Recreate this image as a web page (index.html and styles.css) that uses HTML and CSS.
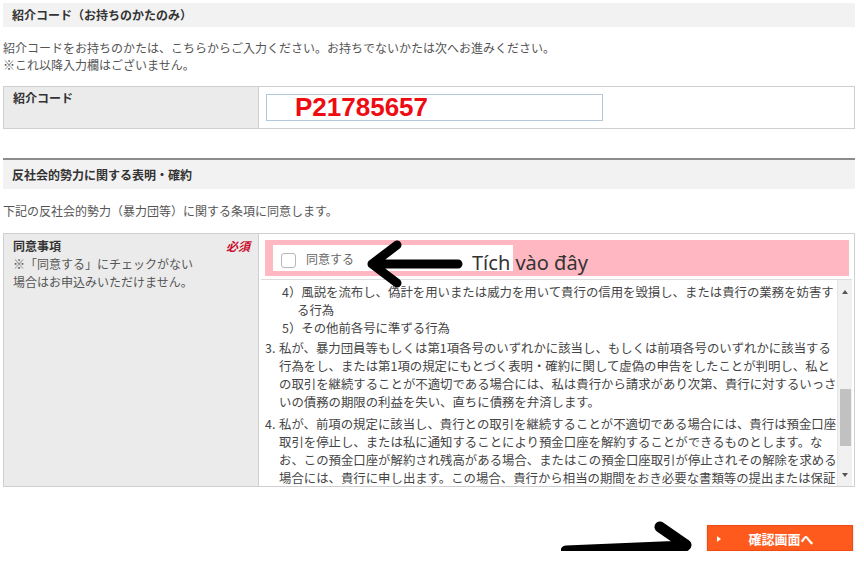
FILE: index.html
```html
<!DOCTYPE html>
<html lang="ja">
<head>
<meta charset="UTF-8">
<title>紹介コード・反社会的勢力に関する表明</title>
<link rel="stylesheet" href="styles.css">
</head>
<body>

<div class="page">

    <!-- 紹介コード -->
    <div class="sec-head first">紹介コード（お持ちのかたのみ）</div>
    <p class="lead">紹介コードをお持ちのかたは、こちらからご入力ください。お持ちでないかたは次へお進みください。<br>※これ以降入力欄はございません。</p>

    <div class="form-row row-code">
        <div class="label-cell">
            <span class="label">紹介コード</span>
        </div>
        <div class="value-cell">
            <input class="code-input" type="text" value="P21785657">
        </div>
    </div>

    <!-- 反社会的勢力 -->
    <div class="sec-head second">反社会的勢力に関する表明・確約</div>
    <p class="lead lead-2">下記の反社会的勢力（暴力団等）に関する条項に同意します。</p>

    <div class="form-row row-agree">
        <div class="label-cell">
            <div class="label-line">
                <span class="label">同意事項</span>
                <span class="required">必須</span>
            </div>
            <p class="note">※「同意する」にチェックがない<br>場合はお申込みいただけません。</p>
        </div>
        <div class="value-cell agree-cell">
            <div class="agree-box">
                <label class="agree-label">
                    <span class="checkbox"></span>
                    <span>同意する</span>
                </label>
            </div>
            <div class="terms">
                <div class="terms-text">
                    <ol class="sub-list">
                        <li>4）風説を流布し、偽計を用いまたは威力を用いて貴行の信用を毀損し、または貴行の業務を妨害す<br>る行為</li>
                        <li>5）その他前各号に準ずる行為</li>
                    </ol>
                    <ol class="main-list">
                        <li><span class="num">3.</span>私が、暴力団員等もしくは第1項各号のいずれかに該当し、もしくは前項各号のいずれかに該当する<br>行為をし、または第1項の規定にもとづく表明・確約に関して虚偽の申告をしたことが判明し、私と<br>の取引を継続することが不適切である場合には、私は貴行から請求があり次第、貴行に対するいっさ<br>いの債務の期限の利益を失い、直ちに債務を弁済します。</li>
                        <li><span class="num">4.</span>私が、前項の規定に該当し、貴行との取引を継続することが不適切である場合には、貴行は預金口座<br>取引を停止し、または私に通知することにより預金口座を解約することができるものとします。な<br>お、この預金口座が解約され残高がある場合、またはこの預金口座取引が停止されその解除を求める<br>場合には、貴行に申し出ます。この場合、貴行から相当の期間をおき必要な書類等の提出または保証</li>
                    </ol>
                </div>
                <div class="scrollbar">
                    <span class="arrow-up"></span>
                    <span class="thumb"></span>
                    <span class="arrow-down"></span>
                </div>
            </div>
        </div>
    </div>

    <div class="actions">
        <button class="btn-confirm" type="button"><span class="btn-mark"></span>確認画面へ</button>
    </div>

    <!-- annotations drawn over the form -->
    <svg class="note-arrow arrow-left" width="100" height="50" viewBox="0 0 100 50">
        <path d="M92 25 L6 25 M31 6 L6 25 L31 44" fill="none" stroke="#000" stroke-width="9" stroke-linecap="round" stroke-linejoin="round"/>
    </svg>
    <span class="hint">Tích vào đây</span>

    <svg class="note-arrow arrow-right" width="140" height="56" viewBox="0 0 140 56">
        <path d="M5 35 L124 30 M99 11 L125 29 L101 49" fill="none" stroke="#000" stroke-width="11" stroke-linecap="round" stroke-linejoin="round"/>
    </svg>
</div>

</body>
</html>
```

FILE: styles.css
```css
/* Reset */
* {
    box-sizing: border-box;
}

body {
    margin: 0;
    background-color: #fff;
    font-family: "Noto Sans CJK JP", "Noto Sans", sans-serif;
    font-size: 12px;
    color: #555;
}

.page {
    position: relative;
    width: 858px;
    padding: 3px 3px 0 3px;
}

/* Section headers */
.sec-head {
    background-color: #f2f2f2;
    color: #333;
    font-weight: bold;
    font-size: 12px;
    padding-left: 9px;
}

.sec-head.first {
    height: 24px;
    line-height: 24px;
}

.sec-head.second {
    margin-top: 29px;
    height: 31px;
    line-height: 29px;
    border-top: 2px solid #8c8c8c;
}

.lead {
    margin: 12px 0 0;
    line-height: 17px;
}

.lead-2 {
    margin-top: 13px;
}

/* Form rows */
.form-row {
    display: flex;
    margin-top: 13px;
    border: 1px solid #cfcfcf;
}

.row-agree {
    margin-top: 14px;
    height: 254px;
    overflow: hidden;
}

.label-cell {
    width: 255px;
    flex-shrink: 0;
    background-color: #ebebeb;
    border-right: 1px solid #cfcfcf;
    padding: 2px 8px 0 9px;
    line-height: 17px;
}

.row-agree .label-cell {
    padding-top: 3px;
    line-height: 18px;
}

.label {
    font-weight: bold;
    color: #333;
}

.label-line {
    display: flex;
    justify-content: space-between;
}

.required {
    color: #c8102e;
    font-weight: bold;
    font-style: italic;
}

.note {
    margin: 0;
}

.value-cell {
    flex: 1;
    padding: 7px;
}

.code-input {
    display: block;
    width: 337px;
    height: 27px;
    border: 1px solid #b4c8da;
    padding: 0 0 0 28px;
    font-family: "Liberation Sans", Arial, sans-serif;
    font-size: 26px;
    font-weight: bold;
    line-height: 25px;
    color: #ee0b12;
    background: #fff;
}

/* Agreement box */
.agree-cell {
    padding: 6px 0 0 0;
}

.agree-box {
    margin: 0 5px 0 6px;
    height: 36px;
    background-color: #ffb7c2;
    padding: 5px 8px;
}

.agree-label {
    display: flex;
    align-items: center;
    gap: 10px;
    width: 240px;
    height: 26px;
    background: #fff;
    padding-left: 8px;
    color: #666;
}

.checkbox {
    width: 15px;
    height: 15px;
    border: 1px solid #b8b8b8;
    border-radius: 3px;
    margin-top: 4px;
}

/* Terms scroll box */
.terms {
    display: flex;
    margin: 3px 2px 0 2px;
    height: 210px;
    border-top: 1px solid #dcdcdc;
}

.terms-text {
    flex: 1;
    padding: 3px 0 0 4px;
    font-size: 12.4px;
    line-height: 18px;
    color: #454545;
    white-space: nowrap;
    overflow: hidden;
}

.terms-text ol {
    list-style: none;
    margin: 0;
    padding: 0;
}

.sub-list {
    padding-left: 17px !important;
}

.sub-list li {
    padding-left: 15px;
    text-indent: -15px;
}

.main-list {
    margin-top: 2px !important;
}

.main-list li {
    padding-left: 14px;
    text-indent: -14px;
    margin-bottom: 4px;
}

.num {
    display: inline-block;
    width: 14px;
    text-indent: 0;
}

.scrollbar {
    position: relative;
    width: 15px;
    background-color: #f1f1f1;
    border-left: 1px solid #e6e6e6;
}

.thumb {
    position: absolute;
    left: 2px;
    right: 1px;
    top: 109px;
    height: 57px;
    background-color: #c1c1c1;
}

.arrow-up,
.arrow-down {
    position: absolute;
    left: 4px;
    width: 0;
    height: 0;
    border-left: 3.5px solid transparent;
    border-right: 3.5px solid transparent;
}

.arrow-up {
    top: 10px;
    border-bottom: 4px solid #555;
}

.arrow-down {
    top: 193px;
    border-top: 4px solid #555;
}

/* Confirm button */
.actions {
    display: flex;
    justify-content: flex-end;
    margin-top: 38px;
    padding-right: 2px;
}

.btn-confirm {
    position: relative;
    width: 146px;
    height: 26px;
    border: 1px solid #f04a10;
    background-color: #ff5a1e;
    color: #fff;
    font-family: "Noto Sans CJK JP", sans-serif;
    font-size: 13px;
    font-weight: bold;
    padding: 0 0 0 2px;
    box-shadow: 0 1px 2px rgba(0, 0, 0, 0.25);
    cursor: pointer;
}

.btn-mark {
    position: absolute;
    left: 9px;
    top: 10px;
    border-top: 3px solid transparent;
    border-bottom: 3px solid transparent;
    border-left: 4px solid #fff;
}

/* Annotations */
.note-arrow {
    position: absolute;
}

.arrow-left {
    left: 366px;
    top: 239px;
}

.arrow-right {
    left: 561px;
    top: 516px;
}

.hint {
    position: absolute;
    left: 472px;
    top: 249px;
    font-family: "Noto Sans", sans-serif;
    font-size: 20px;
    line-height: 28px;
    color: #333;
}
```
